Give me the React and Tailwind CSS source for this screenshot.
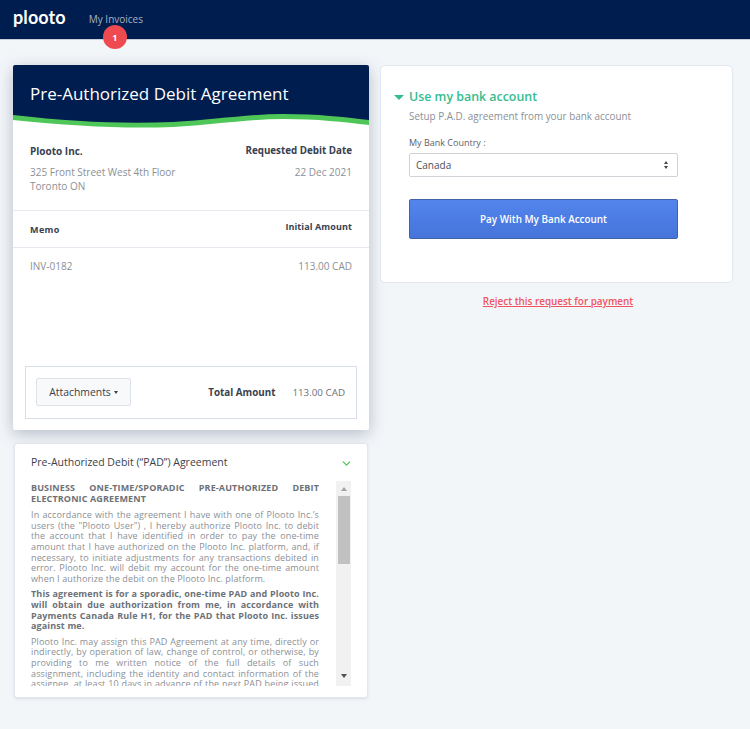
import { ChevronDown } from 'lucide-react';

const App = () => {
  return (
    <div className="min-h-[729px] bg-[#f3f6f9] font-['Open_Sans',sans-serif] text-[#3a3f4b]">
      {/* Top Nav */}
      <header className="h-10 bg-[#001d4f] border-b border-[#c9d0dc] flex items-start pl-[13px]">
        <span className="font-['Lato',sans-serif] font-bold text-[18px] leading-[34px] text-white tracking-[0.1px]">plooto</span>
        <div className="relative ml-[23px] mt-[13px] text-[10px] leading-[13px] text-[#aab2c2]">
          My Invoices
          <span className="absolute left-[14px] top-[12px] w-6 h-6 rounded-full bg-[#ef4a4f] text-white text-[9px] font-bold flex items-center justify-center">1</span>
        </div>
      </header>

      <div className="flex items-start pl-[13px] pt-[25px]">
        {/* Left Column */}
        <div className="w-[356px]">
          <div className="bg-white rounded-[2px] shadow-[0_4px_16px_rgba(40,55,85,0.3)] overflow-hidden">
            <div className="bg-[#001d4f] h-[48px] pl-[17px] pt-[16px]">
              <h1 className="text-[17px] leading-[26px] text-white">Pre-Authorized Debit Agreement</h1>
            </div>
            <svg viewBox="0 0 356 16" width="356" height="16" className="block">
              <path d="M0 0H356V8C330 5 305 2 270 2C235 2 200 8 160 10C110 12 60 10 0 3Z" fill="#001d4f" />
              <path d="M0 2C60 9 110 11 160 9C200 7 235 1 270 1C305 1 330 4 356 7V12C330 9 305 6 270 6C235 6 200 12 160 14C110 16 60 13 0 7Z" fill="#4fc758" />
            </svg>

            <div className="flex justify-between px-[17px] pt-[15px] h-[82px] border-b border-[#e6e9f0] text-[10px]">
              <div>
                <p className="font-bold leading-[14px] text-[#39404f]">Plooto Inc.</p>
                <p className="mt-[7px] leading-[14px] text-[#8b8f96]">325 Front Street West 4th Floor</p>
                <p className="leading-[14px] text-[#8b8f96]">Toronto ON</p>
              </div>
              <div className="text-right">
                <p className="font-bold text-[9.8px] leading-[14px] text-[#39404f]">Requested Debit Date</p>
                <p className="mt-[7px] leading-[14px] text-[#8b8f96]">22 Dec 2021</p>
              </div>
            </div>

            <div className="flex justify-between px-[17px] h-[37px] border-b border-[#e6e9f0] text-[9px] font-bold text-[#39404f]">
              <span className="mt-[12px] leading-[13px] tracking-[0.4px]">Memo</span>
              <span className="mt-[9px] leading-[13px] tracking-[0.1px]">Initial Amount</span>
            </div>

            <div className="flex justify-between px-[17px] pt-[11px] h-[118px] text-[10px] leading-[14px] text-[#8b8f96]">
              <span>INV-0182</span>
              <span>113.00 CAD</span>
            </div>

            {/* Totals */}
            <div className="mx-[12px] mb-[11px] h-[53px] border border-[#d9dfea] flex items-center justify-between pl-[10px] pr-[11px]">
              <button className="h-[28px] w-[95px] mb-[2px] pt-[2px] rounded-[2px] border border-[#dfe3ea] bg-[#f7f9fb] text-[10.4px] text-[#3a3f4b] flex items-center justify-center gap-[3px]">
                Attachments
                <span className="w-0 h-0 border-x-[2.5px] border-x-transparent border-t-[3px] border-t-[#3a3f4b]"></span>
              </button>
              <div className="flex items-center pt-[1px] text-[9.8px]">
                <span className="font-bold text-[#39404f] mr-[17px]">Total Amount</span>
                <span className="text-[#6d7178]">113.00 CAD</span>
              </div>
            </div>
          </div>

          {/* PAD Agreement */}
          <div className="mt-[13px] mx-[1px] h-[255px] bg-white rounded-[3px] border border-[#e2e6ee] shadow-[0_1px_3px_rgba(40,55,85,0.12)] px-[16px] relative">
            <div className="flex items-center justify-between h-[37px]">
              <span className="text-[10.5px] text-[#3a3f4b]">Pre-Authorized Debit (“PAD”) Agreement</span>
              <ChevronDown size={13} className="text-[#4fc758] mr-[-2px] mt-[1px]" strokeWidth={2.4} />
            </div>
            <div className="flex justify-between h-[205px] overflow-hidden">
              <div className="w-[288px] text-[9px] leading-[10.6px] text-[#8b8f96] text-justify tracking-[0.13px]">
                <p className="font-bold text-[#6d7178] mt-[2px]">BUSINESS ONE-TIME/SPORADIC PRE-AUTHORIZED DEBIT ELECTRONIC AGREEMENT</p>
                <p className="mt-[6px]">In accordance with the agreement I have with one of Plooto Inc.’s users (the "Plooto User") , I hereby authorize Plooto Inc. to debit the account that I have identified in order to pay the one-time amount that I have authorized on the Plooto Inc. platform, and, if necessary, to initiate adjustments for any transactions debited in error. Plooto Inc. will debit my account for the one-time amount when I authorize the debit on the Plooto Inc. platform.</p>
                <p className="mt-[5px] font-bold text-[#6d7178]">This agreement is for a sporadic, one-time PAD and Plooto Inc. will obtain due authorization from me, in accordance with Payments Canada Rule H1, for the PAD that Plooto Inc. issues against me.</p>
                <p className="mt-[5px]">Plooto Inc. may assign this PAD Agreement at any time, directly or indirectly, by operation of law, change of control, or otherwise, by providing to me written notice of the full details of such assignment, including the identity and contact information of the assignee, at least 10 days in advance of the next PAD being issued by me.</p>
              </div>
              {/* Scrollbar */}
              <div className="w-[15px] bg-[#f1f1f1] flex flex-col items-center">
                <span className="mt-[6px] w-0 h-0 border-x-[3.5px] border-x-transparent border-b-[4px] border-b-[#a3a3a3]"></span>
                <div className="mt-[5px] w-[12px] h-[68px] bg-[#c1c1c1]"></div>
                <span className="mt-auto mb-[8px] w-0 h-0 border-x-[3.5px] border-x-transparent border-t-[4px] border-t-[#505050]"></span>
              </div>
            </div>
          </div>
        </div>

        {/* Right Column */}
        <div className="ml-[11px] w-[353px]">
          <div className="h-[218px] bg-white rounded-[5px] border border-[#e2e6ee] pl-[28px] pt-[21px]">
            <div className="flex items-center -ml-[15px]">
              <span className="w-0 h-0 border-x-[5px] border-x-transparent border-t-[5px] border-t-[#35bd8f]"></span>
              <span className="ml-[5px] text-[12.4px] leading-[20px] font-semibold text-[#35bd8f]">Use my bank account</span>
            </div>
            <p className="mt-[1px] text-[9.9px] leading-[16px] text-[#8b8f96]">Setup P.A.D. agreement from your bank account</p>
            <p className="mt-[13px] text-[9px] leading-[12px] text-[#5c6068]">My Bank Country :</p>
            <div className="mt-[4px] w-[269px] h-[24px] rounded-[2px] border border-[#cfd2d6] bg-white flex items-center justify-between pl-[6px] pr-[9px] text-[10px] text-[#4c5058]">
              Canada
              <span className="flex flex-col gap-[2px]">
                <span className="w-0 h-0 border-x-[2.5px] border-x-transparent border-b-[3px] border-b-[#444]"></span>
                <span className="w-0 h-0 border-x-[2.5px] border-x-transparent border-t-[3px] border-t-[#444]"></span>
              </span>
            </div>
            <button className="mt-[22px] w-[269px] h-[40px] rounded-[2px] border border-[#3f63a8] bg-gradient-to-b from-[#5285ec] to-[#4674da] text-[9.9px] font-semibold text-white">Pay With My Bank Account</button>
          </div>
          <div className="mt-[11px] pl-[3px] text-center text-[9.9px] leading-[14px] font-semibold text-[#ee5560] underline">Reject this request for payment</div>
        </div>
      </div>
    </div>
  );
};

export default App;
